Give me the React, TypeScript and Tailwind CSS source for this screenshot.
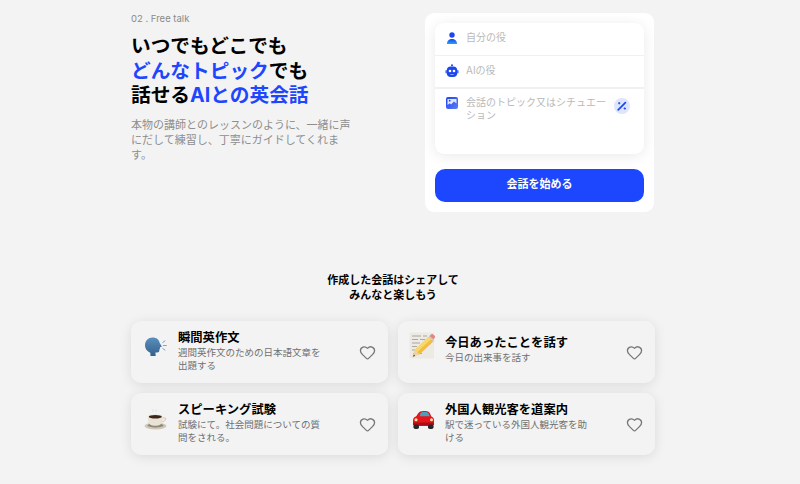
import { Heart } from "lucide-react";
import type { ReactNode } from "react";

const jp = "font-['Inter','Noto_Sans_CJK_JP',sans-serif]";

function Speaking() {
  return (
    <svg width="24" height="24" viewBox="0 0 24 24">
      <defs>
        <linearGradient id="sp" x1="0" y1="0" x2="0" y2="1">
          <stop offset="0" stopColor="#5b8fbd" />
          <stop offset="1" stopColor="#33618c" />
        </linearGradient>
      </defs>
      <path d="M8.500 2.500c4 0 6.800 2.200 7.100 5.300l2.100 3.400c.2.400 0 .7-.5.8l-1.300.3.100 1.300c0 .5-.3.7-.7.8l.1 1.200c0 1.300-1 2-2.200 2h-1.800l.3 3.400H6.500l-.2-3.300C3.500 16.500 1 14 1 10.200 1 5.800 4.300 2.500 8.500 2.500z" fill="url(#sp)" />
      <path d="M18.800 7.500l2.200-1.600M19.300 10.500H22.300M18.800 13.500l2.200 1.600" stroke="#6d97bb" strokeWidth="0.9" strokeLinecap="round" />
    </svg>
  );
}

function Coffee() {
  return (
    <svg width="24" height="24" viewBox="0 0 24 24">
      <path d="M9 5c-1-1 1-1.500 0-3M12 5c-1-1 1-1.500 0-3" stroke="#dcdcdc" strokeWidth="0.7" fill="none" />
      <ellipse cx="11.500" cy="19" rx="11" ry="3.500" fill="#cfc8ba" />
      <ellipse cx="11.500" cy="18.400" rx="8" ry="2" fill="#8f8778" />
      <path d="M3.500 9.500h15.500l-.7 5c-.4 2.800-3.200 4.300-7 4.300s-6.700-1.500-7.200-4.300z" fill="#e9e3d6" />
      <path d="M18.500 10.500c3-1 4.500 .5 3.500 2.300-.8 1.500-2.500 2.200-4.200 2.400l.3-1.200c1.200-.2 2.300-.7 2.800-1.600.4-.8-.5-1.300-2.500-.8z" fill="#d7d0c1" />
      <ellipse cx="11.300" cy="9.500" rx="7.800" ry="2.300" fill="#efe9dd" />
      <ellipse cx="11.300" cy="9.700" rx="6.500" ry="1.700" fill="#3d2517" />
    </svg>
  );
}

function Memo() {
  return (
    <svg width="26" height="27" viewBox="0 0 26 27">
      <rect x="0.500" y="0.500" width="24.500" height="26" fill="#eceae2" />
      <path d="M3 4h9M14 4h4M3 7.500h6M11 7.500h5M3 11h8M3 14.500h5M3 18h3M4 21.500h4M10 21.500h3" stroke="#8b8b86" strokeWidth="0.7" />
      <path d="M19.500 5l5 4.300L10.500 22.500l-5-4.300z" fill="#f3bd3f" />
      <path d="M19.500 5l2.500 2.200L8 20.300l-2.500-2.100z" fill="#f9d76b" />
      <path d="M5.500 18.200l5 4.300-6.800 2.200z" fill="#edd2a5" />
      <path d="M5 22.500l-1.300 2.200 2.500-.8z" fill="#444" />
      <path d="M20.500 4l1.600-1.500c.8-.6 1.800-.5 2.500 .2l1 1c.6 .7.600 1.700 0 2.400L24 8z" fill="#e8867d" />
      <path d="M19.500 5l1-1 5 4-1 1.300z" fill="#c9c9c9" />
    </svg>
  );
}

function Car() {
  return (
    <svg width="24" height="24" viewBox="0 0 24 24">
      <path d="M7 6.500c1-1.700 2.800-2.500 5.500-2.500h2c2.500 0 4 1 4.800 3l1.300 3.500H4.500z" fill="#d71920" />
      <path d="M8.200 10.300l1.300-3.700c.4-1 1.500-1.500 3-1.500h2c1.700 0 2.800.5 3.300 1.700l1.300 3.500z" fill="#4e9fb6" />
      <path d="M2 13c0-2.200 2-3.500 4.500-3.700h12c2.800.2 4.500 1.500 4.500 3.800v3.400c0 1.600-1 2.500-2.500 2.500h-16C2.800 19 2 18 2 16.500z" fill="#e8141c" />
      <rect x="2" y="15.500" width="21" height="3" rx="1.200" fill="#a80f14" />
      <circle cx="5" cy="12.800" r="1.500" fill="#ffe9a8" />
      <circle cx="20.500" cy="12.800" r="1.500" fill="#ffe9a8" />
      <rect x="2.500" y="17.500" width="5.500" height="4.500" rx="1.800" fill="#26262a" />
      <rect x="17" y="17.500" width="5.500" height="4.500" rx="1.800" fill="#26262a" />
    </svg>
  );
}

function UserIcon() {
  return (
    <svg width="12" height="12" viewBox="0 0 12 12">
      <defs>
        <linearGradient id="u" x1="0" y1="0" x2="0" y2="1">
          <stop offset="0" stopColor="#1c44f0" />
          <stop offset="1" stopColor="#22a5f5" />
        </linearGradient>
      </defs>
      <circle cx="6" cy="3" r="2.700" fill="#1d47ee" />
      <path d="M1 12c0-3.200 2.200-5 5-5s5 1.800 5 5z" fill="url(#u)" />
    </svg>
  );
}

function BotIcon() {
  return (
    <svg width="14" height="14" viewBox="0 0 14 14">
      <circle cx="7" cy="1.300" r="1" fill="#1d47ee" />
      <rect x="0.300" y="6" width="2" height="3.500" rx="1" fill="#5f7cf5" />
      <rect x="11.700" y="6" width="2" height="3.500" rx="1" fill="#5f7cf5" />
      <rect x="1.800" y="2.500" width="10.400" height="10.500" rx="4" fill="#1d47ee" />
      <circle cx="5" cy="7" r="1.300" fill="#fff" />
      <circle cx="9" cy="7" r="1.300" fill="#fff" />
      <rect x="5.300" y="10" width="3.400" height="1" rx="0.500" fill="#8ea4fa" />
    </svg>
  );
}

function ImageIcon() {
  return (
    <svg width="12" height="12" viewBox="0 0 12 12">
      <defs>
        <linearGradient id="im" x1="0" y1="0" x2="1" y2="1">
          <stop offset="0" stopColor="#1c44f0" />
          <stop offset="1" stopColor="#5f7cf5" />
        </linearGradient>
      </defs>
      <rect width="12" height="12" rx="2" fill="url(#im)" />
      <path d="M1.500 2h9v4.500L8 4.500 5 7.500 3.800 6.300 1.500 8z" fill="#dfe6ff" />
      <circle cx="3.700" cy="3.700" r="0.900" fill="#1d47ee" />
    </svg>
  );
}

function Wand() {
  return (
    <svg width="10" height="10" viewBox="0 0 10 10">
      <path d="M1.200 8.800L8.400 1.600" stroke="#1d47ee" strokeWidth="1.700" strokeLinecap="round" />
      <path d="M2.200 1v2.400M1 2.200h2.400M7.800 6.300v2.400M6.600 7.500H9" stroke="#1d47ee" strokeWidth="0.900" />
    </svg>
  );
}

function Row({ icon, children, className }: { icon: ReactNode; children: ReactNode; className: string }) {
  return (
    <div className={`flex items-start pl-[10px] ${className}`}>
      <div className="w-[14px] h-[14px] flex items-center justify-center shrink-0">{icon}</div>
      <div className="ml-[7px] text-[10px] leading-[13px] text-[#b9b9b9] w-[142px]">{children}</div>
    </div>
  );
}

function TalkCard({ emoji, title, desc, center, memo }: { emoji: ReactNode; title: string; desc: string; center?: boolean; memo?: boolean }) {
  return (
    <div className="h-[62px] bg-[#f3f3f3] rounded-[10px] shadow-[0_2px_12px_rgba(0,0,0,0.1)] flex items-start pl-[12px] pr-[12px]">
      <div className={`w-[26px] h-[26px] flex items-center justify-center shrink-0 ${memo ? "mt-[11px] ml-[-1px] mr-[1px]" : "mt-[13px]"}`}>{emoji}</div>
      <div className={`ml-[9px] w-[145px] ${center ? "pt-[14px]" : "pt-[9px]"}`}>
        <div className="text-[12.300px] leading-[15px] font-bold text-black">{title}</div>
        <div className="text-[9.500px] leading-[12.500px] mt-[2px] text-[#6f6f6f]">{desc}</div>
      </div>
      <Heart className="ml-auto mt-[23px] text-[#757575] shrink-0" size={17} strokeWidth={1.8} />
    </div>
  );
}

export default function App() {
  return (
    <div className={`w-[800px] h-[484px] overflow-hidden bg-[#f3f3f3] ${jp}`}>
      <div className="ml-[131px] w-[524px]">
        <div className="flex justify-between h-[212px] pt-[13px]">
          <div className="w-[225px]">
            <div className="text-[9.500px] leading-[12px] text-[#8a8a8a]">02 . Free talk</div>
            <h1 className="mt-[9px] text-[19.700px] leading-[24.500px] font-bold text-black whitespace-nowrap">
              いつでもどこでも
              <br />
              <span className="text-[#1d47ff]">どんなトピック</span>でも
              <br />
              話せる<span className="text-[#1d47ff]">AIとの英会話</span>
            </h1>
            <p className="mt-[10px] text-[11px] leading-[15px] text-[#8e8e8e]">
              本物の講師とのレッスンのように、一緒に声にだして練習し、丁寧にガイドしてくれます。
            </p>
          </div>
          <div className="w-[229px] h-[199px] bg-white rounded-[9px] p-[10px] mr-[1px]">
            <div className="h-[131px] rounded-[9px] bg-white shadow-[0_2px_14px_rgba(0,0,0,0.09)] flex flex-col">
              <Row className="h-[33px] pt-[8px] border-b border-[#f0f0f0]" icon={<UserIcon />}>自分の役</Row>
              <Row className="h-[33px] pt-[8px] border-b-2 border-[#f0f0f0]" icon={<BotIcon />}>AIの役</Row>
              <div className="relative">
                <Row className="pt-[7px]" icon={<ImageIcon />}>会話のトピック又はシチュエーション</Row>
                <div className="absolute right-[14px] top-[9px] w-[16px] h-[16px] rounded-full bg-[#dfe5fb] flex items-center justify-center">
                  <Wand />
                </div>
              </div>
            </div>
            <button className="mt-[15px] w-full h-[33px] rounded-[10px] bg-[#1d47ff] text-white text-[11px] leading-[31px] pb-[2px] font-bold">
              会話を始める
            </button>
          </div>
        </div>
        <div className="mt-[61px] text-center text-[11px] leading-[14.500px] font-bold text-black">
          作成した会話はシェアして
          <br />
          みんなと楽しもう
        </div>
        <div className="mt-[19px] grid grid-cols-2 gap-x-[10px] gap-y-[10px]">
          <TalkCard emoji={<Speaking />} title="瞬間英作文" desc="週間英作文のための日本語文章を出題する" />
          <TalkCard emoji={<Memo />} memo title="今日あったことを話す" desc="今日の出来事を話す" center />
          <TalkCard emoji={<Coffee />} title="スピーキング試験" desc="試験にて。社会問題についての質問をされる。" />
          <TalkCard emoji={<Car />} title="外国人観光客を道案内" desc="駅で迷っている外国人観光客を助ける" />
        </div>
      </div>
    </div>
  );
}
